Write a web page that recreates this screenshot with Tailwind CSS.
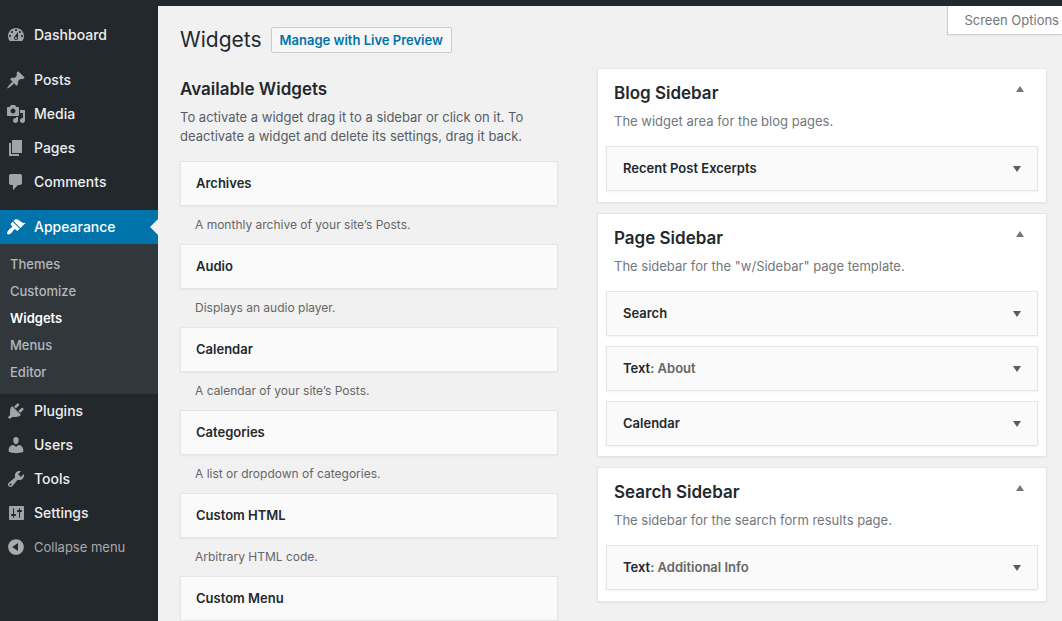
<!DOCTYPE html>
<html lang="en">
<head>
<meta charset="utf-8">
<title>Widgets</title>
<script src="https://cdn.jsdelivr.net/npm/@tailwindcss/browser@4"></script>
</head>
<body class="flex min-h-screen flex-col bg-[#f1f1f1] font-['Inter','Roboto',sans-serif] text-[13px] text-[#23282d]">
<header class="h-[6px] bg-[#23282d]"></header>
<div class="flex flex-1">
  <nav aria-label="Admin menu" class="w-[158px] shrink-0 bg-[#23282d] pt-3 text-sm leading-[18px] font-medium text-[#eee]">
    <ul class="mb-[11px]">
      <li><a href="#" class="flex h-[34px] items-center gap-2 pl-[6px]"><svg class="size-5 fill-[#a0a5aa]" viewBox="0 0 20 20" aria-hidden="true"><path d="M3.76 16h12.48c1.1-1.37 1.76-3.11 1.76-5 0-4.42-3.58-8-8-8s-8 3.58-8 8c0 1.89.66 3.63 1.76 5zM10 4c.55 0 1 .45 1 1s-.45 1-1 1-1-.45-1-1 .45-1 1-1zM6 6c.55 0 1 .45 1 1s-.45 1-1 1-1-.45-1-1 .45-1 1-1zm8 0c.55 0 1 .45 1 1s-.45 1-1 1-1-.45-1-1 .45-1 1-1zm-5.37 5.55L12 7v6c0 1.1-.9 2-2 2s-2-.9-2-2c0-.57.24-1.08.63-1.45zM4 10c.55 0 1 .45 1 1s-.45 1-1 1-1-.45-1-1 .45-1 1-1zm12 0c.55 0 1 .45 1 1s-.45 1-1 1-1-.45-1-1 .45-1 1-1zm-5 3c0-.55-.45-1-1-1s-1 .45-1 1 .45 1 1 1 1-.45 1-1z"/></svg>Dashboard</a></li>
    </ul>
    <ul class="mb-[11px]">
      <li><a href="#" class="flex h-[34px] items-center gap-2 pl-[6px]"><svg class="size-5 fill-[#a0a5aa]" viewBox="0 0 20 20" aria-hidden="true"><path d="M10.44 3.02l1.82-1.82 6.36 6.35-1.83 1.82c-1.05-.68-2.48-.57-3.41.36l-.75.75c-.92.93-1.04 2.35-.35 3.41l-1.83 1.82-2.41-2.41-2.8 2.79c-.42.42-3.38 2.71-3.8 2.29s1.86-3.39 2.28-3.81l2.79-2.79L4.1 9.36l1.83-1.82c1.05.69 2.48.57 3.4-.36l.75-.75c.93-.92 1.05-2.35.36-3.41z"/></svg>Posts</a></li>
      <li><a href="#" class="flex h-[34px] items-center gap-2 pl-[6px]"><svg class="size-5 fill-[#a0a5aa]" viewBox="0 0 20 20" aria-hidden="true"><path d="M13 11V4c0-.55-.45-1-1-1h-1.67L9 1H5L3.67 3H2c-.55 0-1 .45-1 1v7c0 .55.45 1 1 1h10c.55 0 1-.45 1-1zM7 4.5c1.38 0 2.5 1.12 2.5 2.5S8.38 9.5 7 9.5 4.5 8.38 4.5 7 5.62 4.5 7 4.5zM14 6h5v10.5c0 1.38-1.12 2.5-2.5 2.5S14 17.88 14 16.5s1.12-2.5 2.5-2.5c.17 0 .34.02.5.05V9h-3V6zm-4 8.05V13h2v3.5c0 1.38-1.12 2.5-2.5 2.5S7 17.88 7 16.5 8.12 14 9.5 14c.17 0 .34.02.5.05z"/></svg>Media</a></li>
      <li><a href="#" class="flex h-[34px] items-center gap-2 pl-[6px]"><svg class="size-5 fill-[#a0a5aa]" viewBox="0 0 20 20" aria-hidden="true"><path d="M6 15V2h10v13H6zm-1 1h8v2H3V5h2v11z"/></svg>Pages</a></li>
      <li><a href="#" class="flex h-[34px] items-center gap-2 pl-[6px]"><svg class="size-5 fill-[#a0a5aa]" viewBox="0 0 20 20" aria-hidden="true"><path d="M5 2h9c1.1 0 2 .9 2 2v7c0 1.1-.9 2-2 2h-2l-5 5v-5H5c-1.1 0-2-.9-2-2V4c0-1.1.9-2 2-2z"/></svg>Comments</a></li>
    </ul>
    <ul>
      <li>
        <a href="#" class="relative flex h-[34px] items-center gap-2 bg-[#0073aa] pl-[6px] text-white"><svg class="size-5 fill-white" viewBox="0 0 20 20" aria-hidden="true"><path d="M14.48 11.06L7.41 3.99l1.5-1.5c.5-.56 2.3-.47 3.51.32 1.21.8 1.43 1.28 2.91 2.1 1.18.64 2.45 1.26 4.45.85zm-.71.71L6.7 4.7 4.93 6.47c-.39.39-.39 1.02 0 1.41l1.06 1.06c.39.39.39 1.03 0 1.42-.6.6-1.43 1.11-2.21 1.69-.35.26-.7.53-1.01.84C1.43 14.23.4 16.08 1.4 17.07c.99 1 2.84-.03 4.18-1.36.31-.31.58-.66.85-1.02.57-.78 1.08-1.61 1.69-2.21.39-.39 1.02-.39 1.41 0l1.06 1.06c.39.39 1.02.39 1.41 0z"/></svg>Appearance<span class="absolute top-[9px] right-0 border-y-8 border-r-8 border-y-transparent border-r-[#f1f1f1]"></span></a>
        <ul class="bg-[#32373c] pt-[6px] pb-[9px] text-[13px] text-[#b4b9be]">
          <li><a href="#" class="flex h-[27px] items-center pl-[10px]">Themes</a></li>
          <li><a href="#" class="flex h-[27px] items-center pl-[10px]">Customize</a></li>
          <li><a href="#" aria-current="page" class="flex h-[27px] items-center pl-[10px] font-semibold text-white">Widgets</a></li>
          <li><a href="#" class="flex h-[27px] items-center pl-[10px]">Menus</a></li>
          <li><a href="#" class="flex h-[27px] items-center pl-[10px]">Editor</a></li>
        </ul>
      </li>
      <li><a href="#" class="flex h-[34px] items-center gap-2 pl-[6px]"><svg class="size-5 fill-[#a0a5aa]" viewBox="0 0 20 20" aria-hidden="true"><path d="M13.11 4.36L9.87 7.6 8 5.73l3.24-3.24c.35-.34 1.05-.2 1.56.32.52.51.66 1.21.31 1.55zm-8 1.77l.91-1.12 9.01 9.01-1.19.84c-.71.71-2.63 1.16-3.82 1.16H6.14L4.9 17.26c-.59.59-1.54.59-2.12 0-.59-.58-.59-1.53 0-2.12l1.24-1.24v-3.88c0-1.13.4-3.19 1.09-3.89zm7.26 3.97l3.24-3.24c.34-.35 1.04-.21 1.55.31.52.51.66 1.21.31 1.55l-3.24 3.25z"/></svg>Plugins</a></li>
      <li><a href="#" class="flex h-[34px] items-center gap-2 pl-[6px]"><svg class="size-5 fill-[#a0a5aa]" viewBox="0 0 20 20" aria-hidden="true"><path d="M10 9.25c-2.27 0-2.73-3.44-2.73-3.44C7 4.02 7.82 2 9.97 2c2.16 0 2.98 2.02 2.71 3.81 0 0-.41 3.44-2.68 3.44zm0 2.57L12.72 10c2.39 0 4.52 2.33 4.52 4.53v2.49s-3.65 1.13-7.24 1.13c-3.65 0-7.24-1.13-7.24-1.13v-2.49c0-2.25 1.94-4.48 4.47-4.48z"/></svg>Users</a></li>
      <li><a href="#" class="flex h-[34px] items-center gap-2 pl-[6px]"><svg class="size-5 fill-[#a0a5aa]" viewBox="0 0 20 20" aria-hidden="true"><path d="M16.68 9.77c-1.34 1.34-3.3 1.67-4.95.99l-5.41 6.52c-.99.99-2.59.99-3.58 0s-.99-2.59 0-3.57l6.52-5.42c-.68-1.65-.35-3.61.99-4.95 1.28-1.28 3.12-1.62 4.72-1.06l-2.89 2.89 2.82 2.82 2.86-2.87c.53 1.58.18 3.39-1.08 4.65zM3.81 16.21c.4.39 1.04.39 1.43 0 .4-.4.4-1.04 0-1.43-.39-.4-1.03-.4-1.43 0-.39.39-.39 1.03 0 1.43z"/></svg>Tools</a></li>
      <li><a href="#" class="flex h-[34px] items-center gap-2 pl-[6px]"><svg class="size-5 fill-[#a0a5aa]" viewBox="0 0 20 20" aria-hidden="true"><path d="M18 16V4c0-.55-.45-1-1-1H4c-.55 0-1 .45-1 1v12c0 .55.45 1 1 1h13c.55 0 1-.45 1-1zM8 11h1c.55 0 1 .45 1 1s-.45 1-1 1H8v1.500c0 .28-.22.5-.5.5s-.5-.22-.5-.5V13H6c-.55 0-1-.45-1-1s.45-1 1-1h1V5.500c0-.28.22-.5.5-.5s.5.22.5.5V11zm5-2h-1c-.55 0-1-.45-1-1s.45-1 1-1h1V5.500c0-.28.22-.5.5-.5s.5.22.5.5V7h1c.55 0 1 .45 1 1s-.45 1-1 1h-1v5.500c0 .28-.22.5-.5.5s-.5-.22-.5-.5V9z"/></svg>Settings</a></li>
    </ul>
    <button type="button" class="flex h-[34px] w-full items-center gap-2 pl-[6px] text-[13px] font-normal text-[#aaa]"><svg class="size-5 fill-[#aaa]" viewBox="0 0 20 20" aria-hidden="true"><path d="M10 2.16c4.33 0 7.84 3.51 7.84 7.84s-3.51 7.84-7.84 7.84S2.16 14.33 2.16 10 5.67 2.16 10 2.16zm2 11.72V6.12L6.18 9.97z"/></svg>Collapse menu</button>
  </nav>

  <main class="min-w-0 flex-1 pl-[22px]">
    <div class="flex items-start justify-between">
      <div class="flex items-center gap-[9px] pt-[21px]">
        <h1 class="text-[21px] leading-[26px]">Widgets</h1>
        <a href="#" class="rounded-xs border border-[#ccc] bg-[#f7f7f7] px-2 py-[3px] leading-[18px] font-semibold text-[#0073aa]">Manage with Live Preview</a>
      </div>
      <button type="button" class="h-[29px] border-b border-l border-[#ccc] bg-white pt-px pr-[3px] pl-4 text-[#72777c] shadow-xs">Screen Options</button>
    </div>

    <div class="grid grid-cols-[378fr_450fr] gap-[39px] pt-[15px] pr-[15px]">
      <section>
        <h2 class="pt-[10px] text-[17px] leading-[22px] font-semibold">Available Widgets</h2>
        <p class="mt-2 mb-[15px] leading-[19px] text-[#555d66]">To activate a widget drag it to a sidebar or click on it. To<br>deactivate a widget and delete its settings, drag it back.</p>
        <div class="h-[45px] border border-[#e5e5e5] bg-[#fafafa] px-[15px] shadow-xs"><h3 class="leading-[43px] font-semibold">Archives</h3></div>
        <p class="px-[15px] text-xs leading-[38px] text-[#666]">A monthly archive of your site’s Posts.</p>
        <div class="h-[45px] border border-[#e5e5e5] bg-[#fafafa] px-[15px] shadow-xs"><h3 class="leading-[43px] font-semibold">Audio</h3></div>
        <p class="px-[15px] text-xs leading-[38px] text-[#666]">Displays an audio player.</p>
        <div class="h-[45px] border border-[#e5e5e5] bg-[#fafafa] px-[15px] shadow-xs"><h3 class="leading-[43px] font-semibold">Calendar</h3></div>
        <p class="px-[15px] text-xs leading-[38px] text-[#666]">A calendar of your site’s Posts.</p>
        <div class="h-[45px] border border-[#e5e5e5] bg-[#fafafa] px-[15px] shadow-xs"><h3 class="leading-[43px] font-semibold">Categories</h3></div>
        <p class="px-[15px] text-xs leading-[38px] text-[#666]">A list or dropdown of categories.</p>
        <div class="h-[45px] border border-[#e5e5e5] bg-[#fafafa] px-[15px] shadow-xs"><h3 class="leading-[43px] font-semibold">Custom HTML</h3></div>
        <p class="px-[15px] text-xs leading-[38px] text-[#666]">Arbitrary HTML code.</p>
        <div class="h-[45px] border border-[#e5e5e5] bg-[#fafafa] px-[15px] shadow-xs"><h3 class="leading-[43px] font-semibold">Custom Menu</h3></div>
      </section>

      <div class="flex flex-col gap-[10px]">
        <section class="border border-[#e5e5e5] bg-white px-2 pb-[11px] shadow-xs">
          <div class="flex items-start justify-between pt-[13px] pr-[14px] pl-2">
            <h2 class="text-[17px] leading-[22px] font-semibold">Blog Sidebar</h2>
            <button type="button" aria-label="Collapse Blog Sidebar" class="pt-1"><svg class="h-[6px] w-2 fill-[#72777c]" viewBox="0 0 8 6"><path d="M4 0l4 6H0z"/></svg></button>
          </div>
          <p class="mt-2 mb-[15px] pl-2 leading-[19px] text-[#72777c]">The widget area for the blog pages.</p>
          <div class="flex h-[45px] items-center justify-between border border-[#e5e5e5] bg-[#fafafa] px-4 shadow-xs">
            <h3 class="font-semibold">Recent Post Excerpts</h3>
            <button type="button" aria-label="Edit Recent Post Excerpts"><svg class="h-[6px] w-2 fill-[#555d66]" viewBox="0 0 8 6"><path d="M0 0h8L4 6z"/></svg></button>
          </div>
        </section>

        <section class="border border-[#e5e5e5] bg-white px-2 pb-[10px] shadow-xs">
          <div class="flex items-start justify-between pt-[13px] pr-[14px] pl-2">
            <h2 class="text-[17px] leading-[22px] font-semibold">Page Sidebar</h2>
            <button type="button" aria-label="Collapse Page Sidebar" class="pt-1"><svg class="h-[6px] w-2 fill-[#72777c]" viewBox="0 0 8 6"><path d="M4 0l4 6H0z"/></svg></button>
          </div>
          <p class="mt-2 mb-[15px] pl-2 leading-[19px] text-[#72777c]">The sidebar for the "w/Sidebar" page template.</p>
          <div class="flex flex-col gap-[10px]">
            <div class="flex h-[45px] items-center justify-between border border-[#e5e5e5] bg-[#fafafa] px-4 shadow-xs">
              <h3 class="font-semibold">Search</h3>
              <button type="button" aria-label="Edit Search"><svg class="h-[6px] w-2 fill-[#555d66]" viewBox="0 0 8 6"><path d="M0 0h8L4 6z"/></svg></button>
            </div>
            <div class="flex h-[45px] items-center justify-between border border-[#e5e5e5] bg-[#fafafa] px-4 shadow-xs">
              <h3 class="font-semibold">Text<span class="text-[#666]">: About</span></h3>
              <button type="button" aria-label="Edit Text: About"><svg class="h-[6px] w-2 fill-[#555d66]" viewBox="0 0 8 6"><path d="M0 0h8L4 6z"/></svg></button>
            </div>
            <div class="flex h-[45px] items-center justify-between border border-[#e5e5e5] bg-[#fafafa] px-4 shadow-xs">
              <h3 class="font-semibold">Calendar</h3>
              <button type="button" aria-label="Edit Calendar"><svg class="h-[6px] w-2 fill-[#555d66]" viewBox="0 0 8 6"><path d="M0 0h8L4 6z"/></svg></button>
            </div>
          </div>
        </section>

        <section class="border border-[#e5e5e5] bg-white px-2 pb-[11px] shadow-xs">
          <div class="flex items-start justify-between pt-[13px] pr-[14px] pl-2">
            <h2 class="text-[17px] leading-[22px] font-semibold">Search Sidebar</h2>
            <button type="button" aria-label="Collapse Search Sidebar" class="pt-1"><svg class="h-[6px] w-2 fill-[#72777c]" viewBox="0 0 8 6"><path d="M4 0l4 6H0z"/></svg></button>
          </div>
          <p class="mt-2 mb-[15px] pl-2 leading-[19px] text-[#72777c]">The sidebar for the search form results page.</p>
          <div class="flex h-[45px] items-center justify-between border border-[#e5e5e5] bg-[#fafafa] px-4 shadow-xs">
            <h3 class="font-semibold">Text<span class="text-[#666]">: Additional Info</span></h3>
            <button type="button" aria-label="Edit Text: Additional Info"><svg class="h-[6px] w-2 fill-[#555d66]" viewBox="0 0 8 6"><path d="M0 0h8L4 6z"/></svg></button>
          </div>
        </section>
      </div>
    </div>
  </main>
</div>
</body>
</html>
